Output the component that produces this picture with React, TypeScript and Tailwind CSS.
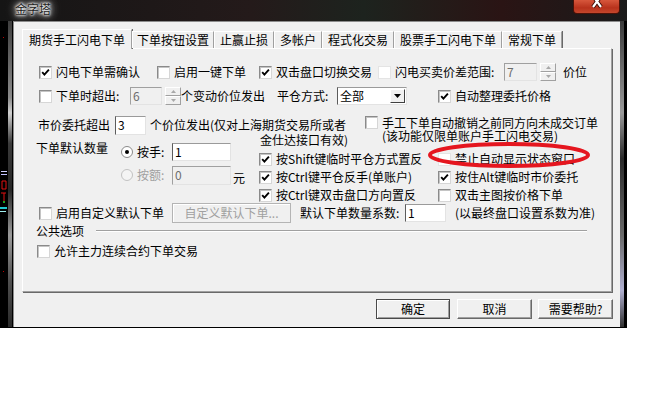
import React from "react";

type Kids = { children?: React.ReactNode };

function Box({ on = false, flat = false }: { on?: boolean; flat?: boolean }) {
  return (
    <span
      className={
        flat
          ? "w-[13px] h-[13px] shrink-0 flex items-center justify-center bg-white border border-[#e4e4e4]"
          : "w-[13px] h-[13px] shrink-0 flex items-center justify-center bg-white border border-t-[#8a8a8a] border-l-[#8a8a8a] border-r-[#d6d6d6] border-b-[#d6d6d6] shadow-[inset_1px_1px_0_#c4c4c4]"
      }
    >
      {on && (
        <svg width="9" height="9" viewBox="0 0 9 9">
          <path d="M1.2 4.2 L3.4 6.6 L7.9 1.6" fill="none" stroke="#000" strokeWidth="1.9" />
        </svg>
      )}
    </span>
  );
}

function Check({ on, flat, children, className = "" }: Kids & { on?: boolean; flat?: boolean; className?: string }) {
  return (
    <div className={"flex items-center shrink-0 " + className}>
      <Box on={on} flat={flat} />
      <span className="ml-[4px] whitespace-nowrap">{children}</span>
    </div>
  );
}

function Radio({ on = false, dis = false }: { on?: boolean; dis?: boolean }) {
  return (
    <span
      className={
        dis
          ? "w-[12px] h-[12px] rounded-full shrink-0 flex items-center justify-center bg-[#f4f4f4] border border-[#c2c2c2]"
          : "w-[12px] h-[12px] rounded-full shrink-0 flex items-center justify-center bg-white border border-[#8a8a8a]"
      }
    >
      {on && <span className="w-[4px] h-[4px] rounded-full bg-black" />}
    </span>
  );
}

function Field({ v, cls, dis = false }: { v: string; cls: string; dis?: boolean }) {
  return (
    <div
      className={
        cls +
        (dis
          ? " shrink-0 flex items-center pl-[2px] bg-[#f0f0f0] text-[#6d6d6d] border border-t-[#a0a0a0] border-l-[#a0a0a0] border-r-[#e3e3e3] border-b-[#e3e3e3]"
          : " shrink-0 flex items-center pl-[2px] bg-white border border-t-[#9a9a9a] border-l-[#5c5c5c] border-r-[#e3e3e3] border-b-[#e3e3e3]")
      }
    >
      {v}
    </div>
  );
}

function Spin({ className = "" }: { className?: string }) {
  return (
    <div className={"flex flex-col w-[16px] h-[18px] shrink-0 " + className}>
      <div className="flex-1 flex items-center justify-center bg-[#f0f0f0] border border-t-white border-l-white border-r-[#a0a0a0] border-b-[#a0a0a0]">
        <svg width="5" height="3" viewBox="0 0 5 3">
          <path d="M0 3 L2.5 0 L5 3Z" fill="#a8a8a8" />
        </svg>
      </div>
      <div className="flex-1 flex items-center justify-center bg-[#f0f0f0] border border-t-white border-l-white border-r-[#a0a0a0] border-b-[#a0a0a0]">
        <svg width="5" height="3" viewBox="0 0 5 3">
          <path d="M0 0 L2.5 3 L5 0Z" fill="#a8a8a8" />
        </svg>
      </div>
    </div>
  );
}

function Tab({ children, w }: Kids & { w: string }) {
  return (
    <div
      className={
        w +
        " h-[17px] shrink-0 flex items-center justify-center bg-[#f0f0f0] border-t border-l border-white border-r border-r-[#a0a0a0] shadow-[1px_0_0_#696969] whitespace-nowrap"
      }
    >
      {children}
    </div>
  );
}

export default function App() {
  return (
    <div className="w-[661px] h-[394px] bg-white relative overflow-hidden text-[12px] leading-[14px] text-black font-['Noto_Sans_CJK_SC',sans-serif]">
      <div className="w-[627px] h-[328px] bg-black flex flex-col">
        {/* title bar */}
        <div className="h-[21px] flex bg-[linear-gradient(90deg,#151515,#241a1a_40%,#1d231e_58%,#2a1414_80%,#1a1a1a)]">
          <span className="ml-[15px] mt-[2px] text-[12px] leading-[13px] text-[#202020] [text-shadow:0_0_2px_#fff,0_0_3px_#fff,0_0_5px_#eee,0_0_8px_#d8d8d8,0_0_12px_#bdbdbd]">
            金字塔
          </span>
          <div className="ml-auto mr-[7px] w-[47px] h-[14px] rounded-b-[4px] border border-t-0 border-[#4a1208] bg-[linear-gradient(180deg,#d7573c,#b8321c_60%,#c5472c)] overflow-hidden">
            <svg width="47" height="14" viewBox="0 0 47 14">
              <path d="M19 -4 L27 7 M27 -4 L19 7" stroke="#3b0d05" strokeWidth="4" />
              <path d="M19 -4 L27 7 M27 -4 L19 7" stroke="#fff" strokeWidth="2.2" />
            </svg>
          </div>
        </div>

        <div className="flex h-[307px]">
          {/* left glass frame */}
          <div className="w-[13px] h-[306px] flex">
            <div className="w-[8px] h-full">
              <svg width="8" height="306" viewBox="0 0 8 306">
                <rect x="1" y="150" width="6" height="1" fill="#d0d0ff" />
                <rect x="1" y="153" width="6" height="1" fill="#c0c0ff" />
                <path d="M2 160 h4 v8 h-4 z M1 172 h5 M4 172 v8" stroke="#e01010" strokeWidth="1" fill="none" />
                <rect x="0" y="186" width="7" height="2" fill="#20c8d0" />
                <rect x="3" y="180" width="2" height="2" fill="#20a020" />
                <rect x="0" y="190" width="6" height="1" fill="#a0f0f0" />
                <rect x="3" y="16" width="1" height="1" fill="#c00000" />
                <rect x="3" y="250" width="1" height="1" fill="#c00000" />
              </svg>
            </div>
            <div className="w-[4px] h-full bg-[linear-gradient(180deg,#3e3e3e,#8a8a8a_25%,#d0d0d0_30%,#3a3a3a_40%,#262626_55%,#9a9a9a_70%,#505050_85%,#2a2a2a)]" />
            <div className="w-[1px] h-full bg-black" />
          </div>

          {/* client */}
          <div className="w-[607px] h-[306px] bg-[#f0f0f0] border-l border-t border-[#8c8c8c] flex flex-col">
            {/* tab strip */}
            <div className="relative z-10 flex items-end ml-[8px] mt-[7px] h-[19px]">
              <div className="w-[110px] h-[20px] -mb-px shrink-0 flex items-center justify-center bg-[#f0f0f0] border-t border-l border-white border-r border-r-[#a0a0a0] shadow-[1px_0_0_#696969]">
                期货手工闪电下单
              </div>
              <Tab w="w-[82px]">下单按钮设置</Tab>
              <Tab w="w-[60px]">止赢止损</Tab>
              <Tab w="w-[48px]">多帐户</Tab>
              <Tab w="w-[72px]">程式化交易</Tab>
              <Tab w="w-[108px]">股票手工闪电下单</Tab>
              <Tab w="w-[60px]">常规下单</Tab>
            </div>

            {/* tab panel */}
            <div className="w-[590px] h-[244px] ml-[8px] border-t border-l border-white border-r border-b border-r-[#a0a0a0] border-b-[#a0a0a0] shadow-[1px_1px_0_#696969] flex flex-col">
              <div className="mt-[14px] h-[18px] pl-[16px] flex items-center">
                <Check on className="w-[118px]">闪电下单需确认</Check>
                <Check className="w-[102px]">启用一键下单</Check>
                <Check on className="w-[119px]">双击盘口切换交易</Check>
                <Check flat className="w-[126px]">闪电买卖价差范围:</Check>
                <Field v="7" dis cls="w-[33px] h-[18px]" />
                <Spin className="ml-[3px]" />
                <span className="ml-[7px]">价位</span>
              </div>

              <div className="mt-[6px] h-[18px] pl-[16px] flex items-center">
                <Check className="w-[91px]">下单时超出:</Check>
                <Field v="6" dis cls="w-[32px] h-[18px]" />
                <Spin className="ml-[3px]" />
                <span className="w-[96px] whitespace-nowrap">个变动价位发出</span>
                <span className="w-[60px] whitespace-nowrap">平仓方式:</span>
                <div className="w-[70px] h-[18px] shrink-0 flex items-center bg-white border border-t-[#9a9a9a] border-l-[#5c5c5c] border-r-[#e3e3e3] border-b-[#e3e3e3]">
                  <span className="ml-[2px] flex-1">全部</span>
                  <div className="w-[15px] h-[14px] mr-[1px] flex items-center justify-center bg-[#f0f0f0] border border-t-white border-l-white border-r-[#404040] border-b-[#404040]">
                    <svg width="7" height="4" viewBox="0 0 7 4">
                      <path d="M0 0 L3.5 4 L7 0Z" fill="#000" />
                    </svg>
                  </div>
                </div>
                <Check on className="ml-[31px]">自动整理委托价格</Check>
              </div>

              <div className="mt-[11px] h-[87px] pl-[13px] flex">
                <div className="w-[329px] shrink-0 flex flex-col">
                  <div className="h-[18px] pl-[2px] flex items-center whitespace-nowrap">
                    <span className="w-[72px]">市价委托超出</span>
                    <Field v="3" cls="ml-[5px] w-[31px] h-[19px]" />
                    <span className="ml-[4px]">个价位发出(仅对上海期货交易所或者</span>
                  </div>
                  <div className="flex">
                    <div className="w-[217px] shrink-0 flex items-start">
                      <span className="w-[84px] mt-[7px] whitespace-nowrap">下单默认数量</span>
                      <div className="mt-[9px] flex flex-col">
                        <div className="h-[18px] flex items-center">
                          <span className="ml-[1px]">
                            <Radio on />
                          </span>
                          <span className="ml-[4px] w-[35px]">按手:</span>
                          <Field v="1" cls="w-[59px] h-[18px]" />
                        </div>
                        <div className="mt-[5px] h-[18px] flex items-center">
                          <span className="ml-[1px]">
                            <Radio dis />
                          </span>
                          <span className="ml-[4px] w-[35px] text-[#a0a0a0]">按额:</span>
                          <Field v="0" dis cls="w-[59px] h-[19px]" />
                          <span className="ml-[2px] mt-[6px]">元</span>
                        </div>
                      </div>
                    </div>
                    <div className="w-[112px] shrink-0 flex flex-col">
                      <div className="h-[12px] leading-[12px] pr-[17px] text-right whitespace-nowrap">金仕达接口有效)</div>
                      <Check on className="mt-[4px] h-[18px] pl-[6px]">按Shift键临时平仓方式置反</Check>
                      <Check on className="h-[18px] pl-[6px]">按Ctrl键平仓反手(单账户)</Check>
                      <Check on className="h-[18px] pl-[6px]">按Ctrl键双击盘口方向置反</Check>
                    </div>
                  </div>
                </div>
                <div className="flex flex-col">
                  <div className="flex items-start">
                    <Box />
                    <div className="ml-[4px] leading-[13px] whitespace-nowrap">
                      <div>手工下单自动撤销之前同方向未成交订单</div>
                      <div>(该功能仅限单账户手工闪电交易)</div>
                    </div>
                  </div>
                  <Check flat className="ml-[73px] mt-[8px] h-[18px]">禁止自动显示状态窗口</Check>
                  <Check on className="ml-[73px] h-[18px]">按住Alt键临时市价委托</Check>
                  <Check className="ml-[73px] h-[18px]">双击主图按价格下单</Check>
                </div>
              </div>

              <div className="h-[20px] pl-[16px] flex items-center">
                <Check className="w-[133px]">启用自定义默认下单</Check>
                <div className="w-[119px] h-[20px] shrink-0 flex items-center justify-center text-[#a0a0a0] bg-[#f0f0f0] border border-[#b4b4b4] shadow-[inset_1px_1px_0_#fff]">
                  自定义默认下单...
                </div>
                <span className="ml-[9px] w-[105px] whitespace-nowrap">默认下单数量系数:</span>
                <Field v="1" cls="w-[41px] h-[18px]" />
                <span className="ml-[9px] whitespace-nowrap">(以最终盘口设置系数为准)</span>
              </div>

              <div className="mt-[1px] h-[13px] pl-[13px] flex items-center">
                <span className="w-[48px] whitespace-nowrap">公共选项</span>
                <div className="ml-[12px] w-[491px] border-t border-b border-t-[#a0a0a0] border-b-white" />
              </div>

              <div className="mt-[5px] h-[18px] pl-[14px] flex items-center">
                <Check>允许主力连续合约下单交易</Check>
              </div>
            </div>

            {/* dialog buttons */}
            <div className="mt-[7px] pr-[7px] flex justify-end">
              <div className="w-[74px] h-[20px] flex items-center justify-center bg-[#f0f0f0] border border-[#4a4a4a] shadow-[inset_1px_1px_0_#fff,inset_-1px_-1px_0_#a0a0a0]">
                确定
              </div>
              <div className="ml-[7px] w-[75px] h-[20px] flex items-center justify-center bg-[#f0f0f0] border border-t-white border-l-white border-r-[#696969] border-b-[#696969] shadow-[inset_-1px_-1px_0_#a0a0a0]">
                取消
              </div>
              <div className="ml-[6px] w-[75px] h-[20px] flex items-center justify-center bg-[#f0f0f0] border border-t-white border-l-white border-r-[#696969] border-b-[#696969] shadow-[inset_-1px_-1px_0_#a0a0a0]">
                需要帮助?
              </div>
            </div>
          </div>

          {/* right glass frame */}
          <div className="w-[7px] h-[306px] flex">
            <div className="w-[4px] h-full bg-[linear-gradient(180deg,#3a3a3a,#9a9a9a_30%,#2a2a2a_45%,#6a6a6a_70%,#b0b0d0_88%,#303030)]" />
            <div className="w-[3px] h-full bg-black" />
          </div>
        </div>
      </div>

      {/* red annotation ring */}
      <svg className="absolute left-[428px] top-[142px]" width="162" height="26" viewBox="0 0 162 26">
        <ellipse cx="81" cy="13" rx="79" ry="11" fill="none" stroke="#e5161f" strokeWidth="4" />
      </svg>
    </div>
  );
}
